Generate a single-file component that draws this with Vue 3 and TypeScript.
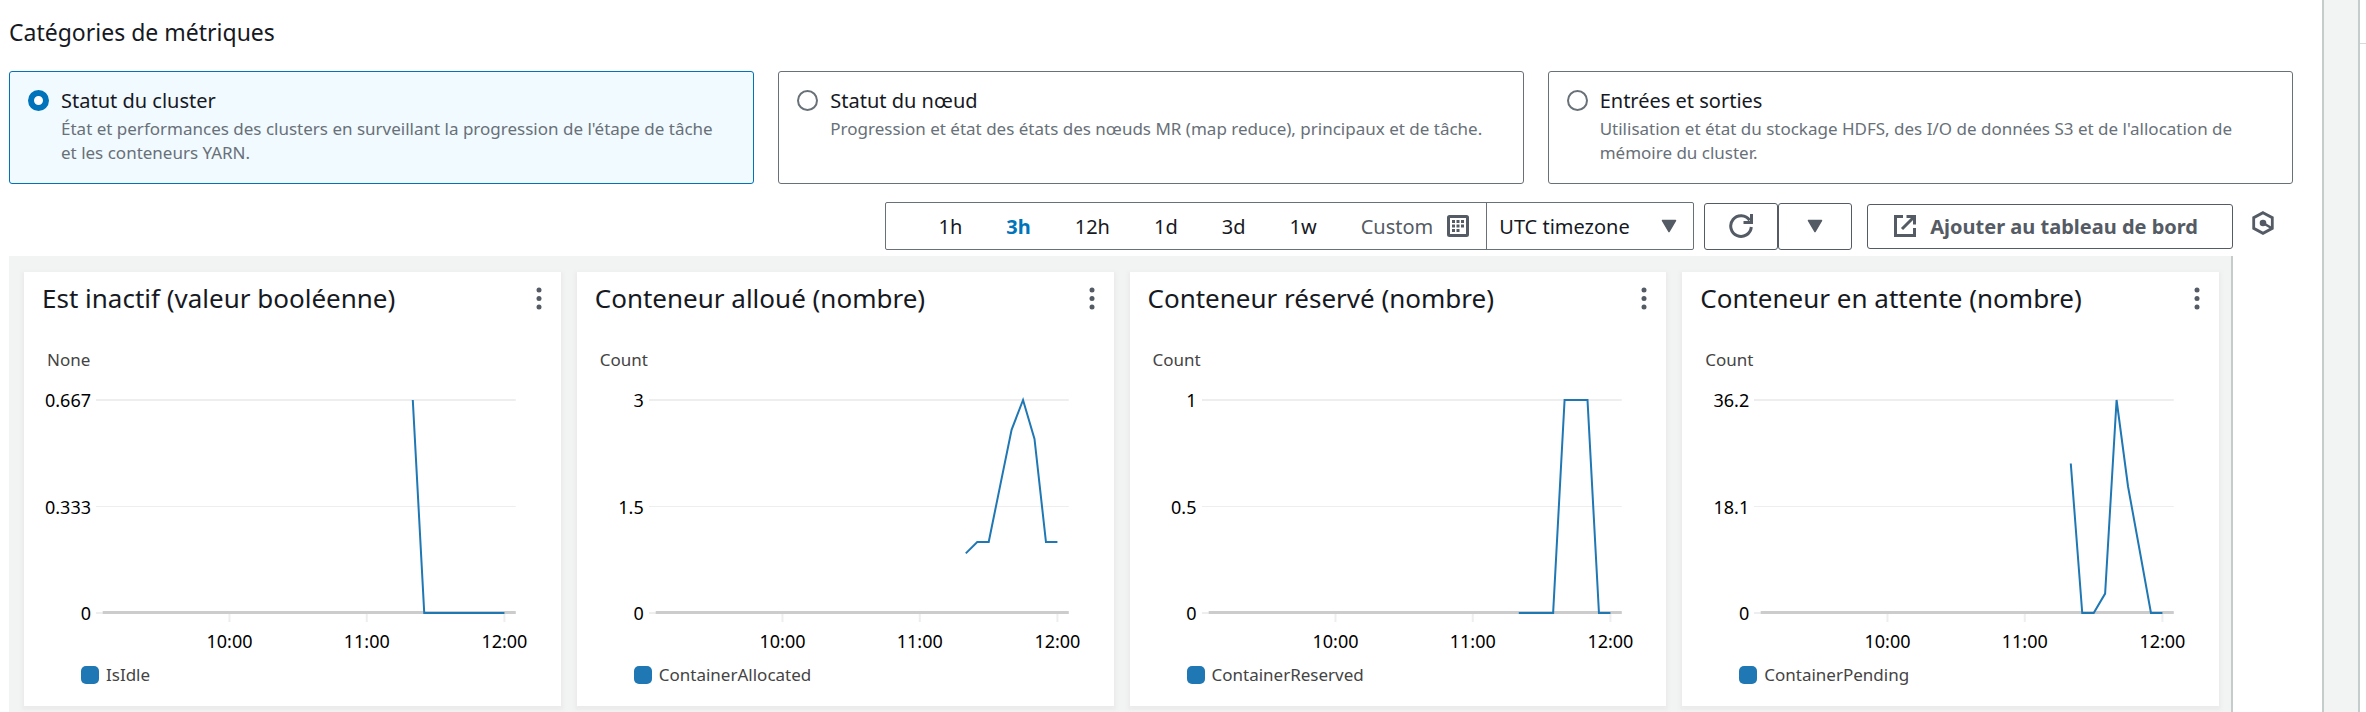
<script setup lang="ts">
import { ref } from 'vue'

interface Category {
  id: string
  title: string
  text: string
}

interface Metric {
  title: string
  unit: string
  legend: string
  max: number
  ticks: string[]
  values: number[]
}

const categories: Category[] = [
  {
    id: 'cluster',
    title: 'Statut du cluster',
    text: "État et performances des clusters en surveillant la progression de l'étape de tâche et les conteneurs YARN.",
  },
  {
    id: 'node',
    title: 'Statut du nœud',
    text: 'Progression et état des états des nœuds MR (map reduce), principaux et de tâche.',
  },
  {
    id: 'io',
    title: 'Entrées et sorties',
    text: "Utilisation et état du stockage HDFS, des I/O de données S3 et de l'allocation de mémoire du cluster.",
  },
]

const ranges = ['1h', '3h', '12h', '1d', '3d', '1w']

const metrics: Metric[] = [
  {
    title: 'Est inactif (valeur booléenne)',
    unit: 'None',
    legend: 'IsIdle',
    max: 0.667,
    ticks: ['0.667', '0.333', '0'],
    values: [0.667, 0, 0, 0, 0, 0, 0, 0, 0],
  },
  {
    title: 'Conteneur alloué (nombre)',
    unit: 'Count',
    legend: 'ContainerAllocated',
    max: 3,
    ticks: ['3', '1.5', '0'],
    values: [0.84, 1, 1, 1.79, 2.58, 3, 2.45, 1, 1],
  },
  {
    title: 'Conteneur réservé (nombre)',
    unit: 'Count',
    legend: 'ContainerReserved',
    max: 1,
    ticks: ['1', '0.5', '0'],
    values: [0, 0, 0, 0, 1, 1, 1, 0, 0],
  },
  {
    title: 'Conteneur en attente (nombre)',
    unit: 'Count',
    legend: 'ContainerPending',
    max: 36.2,
    ticks: ['36.2', '18.1', '0'],
    values: [25.4, 0, 0, 3.3, 36.2, 21.5, 10.8, 0, 0],
  },
]

const category = ref('cluster')
const range = ref('3h')
const timezone = ref('utc')

/* Plot geometry: 1000 units wide, the hour marks as shares of that width. */
const plotHeight = 213
const hours = [
  { label: '10:00', at: 318 },
  { label: '11:00', at: 645 },
  { label: '12:00', at: 973 },
]
const step = 327.5 / 12

/* Samples come every five minutes and the last one is at 12:00. */
function points(m: Metric): string {
  return m.values
    .map((v, i) => {
      const x = 973 - (m.values.length - 1 - i) * step
      const y = plotHeight * (1 - v / m.max)
      return `${x.toFixed(1)},${y.toFixed(1)}`
    })
    .join(' ')
}
</script>

<template>
  <div class="page">
    <main class="panel">
      <h2 class="heading" id="cat-heading">Catégories de métriques</h2>

      <div class="tiles" role="radiogroup" aria-labelledby="cat-heading">
        <label
          v-for="c in categories"
          :key="c.id"
          class="tile"
          :class="{ selected: category === c.id }"
        >
          <input v-model="category" class="radio" type="radio" name="category" :value="c.id" />
          <span class="tile-body">
            <span class="tile-title">{{ c.title }}</span>
            <span class="tile-text">{{ c.text }}</span>
          </span>
        </label>
      </div>

      <div class="toolbar">
        <div class="time">
          <div class="ranges">
            <button
              v-for="r in ranges"
              :key="r"
              type="button"
              class="range"
              :class="{ active: range === r }"
              @click="range = r"
            >{{ r }}</button>
            <button type="button" class="range custom">
              Custom
              <svg width="22" height="22" viewBox="0 0 22 22" aria-hidden="true">
                <rect x="1.5" y="1.5" width="19" height="19" rx="1" fill="#fff" stroke="#545b64" stroke-width="3" />
                <g fill="#545b64">
                  <rect x="5" y="5" width="3" height="3" />
                  <rect x="9.5" y="5" width="3" height="3" />
                  <rect x="14" y="5" width="3" height="3" />
                  <rect x="5" y="9.500" width="3" height="3" />
                  <rect x="9.5" y="9.500" width="3" height="3" />
                  <rect x="14" y="9.500" width="3" height="3" />
                  <rect x="5" y="14" width="3" height="3" />
                  <rect x="9.5" y="14" width="3" height="3" />
                </g>
              </svg>
            </button>
          </div>
          <div class="zone">
            <select v-model="timezone" aria-label="Timezone">
              <option value="utc">UTC timezone</option>
              <option value="local">Local timezone</option>
            </select>
            <svg class="caret" width="16" height="14" viewBox="0 0 16 14" aria-hidden="true">
              <path d="M1.500 1.500h13L8 12.500z" fill="#545b64" stroke="#545b64" stroke-width="1.500" stroke-linejoin="round" />
            </svg>
          </div>
        </div>

        <div class="split">
          <button type="button" class="btn icon" aria-label="Actualiser">
            <svg width="26" height="26" viewBox="0 0 26 26" aria-hidden="true">
              <path d="M23.300 14A10.300 10.300 0 1 1 21.600 7.300" fill="none" stroke="#545b64" stroke-width="3" />
              <path d="M23.500 1v8.500H15.500" fill="none" stroke="#545b64" stroke-width="3" />
            </svg>
          </button>
          <button type="button" class="btn icon" aria-label="Options d'actualisation">
            <svg width="16" height="14" viewBox="0 0 16 14" aria-hidden="true">
              <path d="M1.500 1.500h13L8 12.500z" fill="#545b64" stroke="#545b64" stroke-width="1.500" stroke-linejoin="round" />
            </svg>
          </button>
        </div>

        <button type="button" class="btn add">
          <svg width="22" height="22" viewBox="0 0 22 22" aria-hidden="true">
            <path d="M9 1.500H1.500v19h19V13" fill="none" stroke="#545b64" stroke-width="3" />
            <path d="M12.500 1.500h8V9.500M20 2L8 14" fill="none" stroke="#545b64" stroke-width="3" />
          </svg>
          Ajouter au tableau de bord
        </button>

        <button type="button" class="hex" aria-label="Paramètres">
          <svg width="22" height="24" viewBox="0 0 22 24" aria-hidden="true">
            <path d="M11 1.700L20.300 6.700v10.600L11 22.300L1.700 17.300V6.700z" fill="none" stroke="#545b64" stroke-width="2.800" />
            <circle cx="11" cy="12" r="3.300" fill="#545b64" />
            <path d="M11 12l8.500 5" stroke="#545b64" stroke-width="2.600" />
          </svg>
        </button>
      </div>

      <section class="board">
        <article v-for="m in metrics" :key="m.legend" class="card">
          <header class="card-head">
            <h3>{{ m.title }}</h3>
            <button type="button" class="kebab" aria-label="Actions du widget">
              <svg width="6" height="24" viewBox="0 0 6 24" fill="#545b64" aria-hidden="true">
                <circle cx="3" cy="4" r="2.500" />
                <circle cx="3" cy="12.500" r="2.500" />
                <circle cx="3" cy="21" r="2.500" />
              </svg>
            </button>
          </header>
          <div class="unit">{{ m.unit }}</div>
          <div class="chart">
            <div class="scale">
              <span v-for="t in m.ticks" :key="t">{{ t }}</span>
            </div>
            <svg class="plot" role="img" :aria-label="m.title">
              <rect x="0" y="-1" width="100%" height="2" fill="#eee" />
              <rect x="0" y="106" width="100%" height="1" fill="#eee" />
              <rect x="0" y="212" width="100%" height="2" fill="#eee" />
              <svg width="100%" height="222" viewBox="0 0 1000 222" preserveAspectRatio="none" overflow="visible">
                <line x1="16" x2="1000" y1="212.500" y2="212.500" class="axis" />
                <line v-for="h in hours" :key="h.at" :x1="h.at" :x2="h.at" y1="214" y2="222" class="tick" />
                <polyline :points="points(m)" class="series" />
              </svg>
              <text v-for="h in hours" :key="h.label" :x="h.at / 10 + '%'" y="248" class="hour">{{ h.label }}</text>
            </svg>
          </div>
          <div class="legend"><span class="swatch"></span>{{ m.legend }}</div>
        </article>
      </section>
    </main>
    <aside class="side"><div class="side-head"></div></aside>
  </div>
</template>

<style>
body {
  margin: 0;
  background: #f2f3f3;
}
</style>

<style scoped>
.page {
  display: flex;
  gap: 34px;
  min-height: 100vh;
  overflow: hidden;
  box-sizing: border-box;
  color: #16191f;
  font-family: "Noto Sans", "Open Sans", sans-serif;
  font-size: 20px;
}
button,
select {
  font: inherit;
  color: inherit;
  background: none;
  border: 0;
  padding: 0;
  cursor: pointer;
}
svg {
  display: block;
  flex: none;
}
.panel {
  flex: 1;
  min-width: 0;
  box-sizing: border-box;
  padding: 16px 29px 0 9px;
  background: #fff;
  border-right: 2px solid #c4cccc;
}
.side {
  box-sizing: border-box;
  width: 8px;
  flex: none;
  background: #fff;
  border-left: 2px solid #c4cccc;
}
.side-head {
  height: 43px;
  border-bottom: 1px solid #d5dbdb;
}
.heading {
  margin: 0 0 23px;
  font-size: 23px;
  line-height: 32px;
  font-weight: 400;
}
.tiles {
  display: grid;
  grid-template-columns: repeat(3, 1fr);
  gap: 24px;
}
.tile {
  display: flex;
  gap: 12px;
  box-sizing: border-box;
  min-height: 113px;
  padding: 12px 24px 12px 18px;
  border: 1px solid #687078;
  border-radius: 3px;
  background: #fff;
  cursor: pointer;
}
.tile.selected {
  border-color: #0073bb;
  background: #f1faff;
}
.radio {
  appearance: none;
  flex: none;
  width: 21px;
  height: 21px;
  margin: 6px 0 0;
  border: 2px solid #687078;
  border-radius: 50%;
  background: #fff;
}
.radio:checked {
  border: 6px solid #0073bb;
}
.tile-body {
  display: flex;
  flex-direction: column;
}
.tile-title {
  line-height: 33px;
}
.tile-text {
  font-size: 17px;
  line-height: 24px;
  color: #687078;
}
.toolbar {
  display: flex;
  align-items: center;
  justify-content: flex-end;
  margin: 18px 19px 6px 0;
}
.time {
  display: flex;
  box-sizing: border-box;
  height: 48px;
  border: 1px solid #687078;
  border-radius: 2px;
}
.ranges {
  display: flex;
  align-items: center;
  gap: 44px;
  padding: 0 17px 0 52px;
}
.range.active {
  color: #0073bb;
  font-weight: 700;
}
.custom {
  display: flex;
  align-items: center;
  gap: 14px;
  color: #545b64;
}
.zone {
  display: flex;
  align-items: center;
  position: relative;
  border-left: 1px solid #687078;
}
.zone select {
  appearance: none;
  height: 46px;
  width: 206px;
  padding: 0 40px 0 12px;
}
.caret {
  position: absolute;
  right: 16px;
  pointer-events: none;
}
.split {
  display: flex;
  margin: 0 15px 0 10px;
}
.btn {
  display: flex;
  align-items: center;
  justify-content: center;
  box-sizing: border-box;
  height: 45px;
  border: 1px solid #545b64;
  border-radius: 3px;
  background: #fff;
  color: #545b64;
  font-weight: 700;
}
.icon {
  width: 74px;
  height: 47px;
}
.add {
  gap: 14px;
  padding: 0 34px 0 26px;
}
.hex {
  margin-left: 19px;
  padding-bottom: 6px;
}
.board {
  display: grid;
  grid-template-columns: repeat(4, 1fr);
  gap: 16px;
  margin-right: 60px;
  padding: 16px 12px 6px 15px;
  background: #f2f3f3;
  border-right: 2px solid #c4cccc;
}
.card {
  min-width: 0;
  box-sizing: border-box;
  min-height: 434px;
  padding: 8px 0 0;
  background: #fff;
  box-shadow: 0 2px 4px 2px #ebebeb;
}
.card-head {
  display: flex;
  align-items: center;
  justify-content: space-between;
  padding: 0 19px 0 18px;
}
.card-head h3 {
  margin: 0;
  font-size: 26px;
  line-height: 36px;
  font-weight: 400;
}
.unit {
  padding: 32px 0 0 23px;
  font-size: 17px;
  line-height: 24px;
  color: #444;
}
.chart {
  display: flex;
  gap: 5px;
  margin: 28px 45px 0 0;
  height: 213px;
  color: #000;
  font-size: 18px;
}
.scale {
  display: flex;
  flex-direction: column;
  justify-content: space-between;
  width: 67px;
  margin: -12px 0;
  line-height: 24px;
  text-align: right;
}
.plot {
  flex: 1;
  min-width: 0;
  height: 222px;
  overflow: visible;
}
.axis,
.tick,
.series {
  fill: none;
  vector-effect: non-scaling-stroke;
}
.axis {
  stroke: #ccc;
  stroke-width: 3px;
}
.tick {
  stroke: #eee;
  stroke-width: 2px;
}
.series {
  stroke: #1f77b4;
  stroke-width: 2px;
}
.hour {
  text-anchor: middle;
  fill: #000;
}
.legend {
  display: flex;
  align-items: center;
  gap: 7px;
  margin: 50px 0 0 57px;
  font-size: 17px;
  line-height: 24px;
  color: #444;
}
.swatch {
  width: 18px;
  height: 18px;
  border-radius: 5px;
  background: #1f77b4;
}
</style>
